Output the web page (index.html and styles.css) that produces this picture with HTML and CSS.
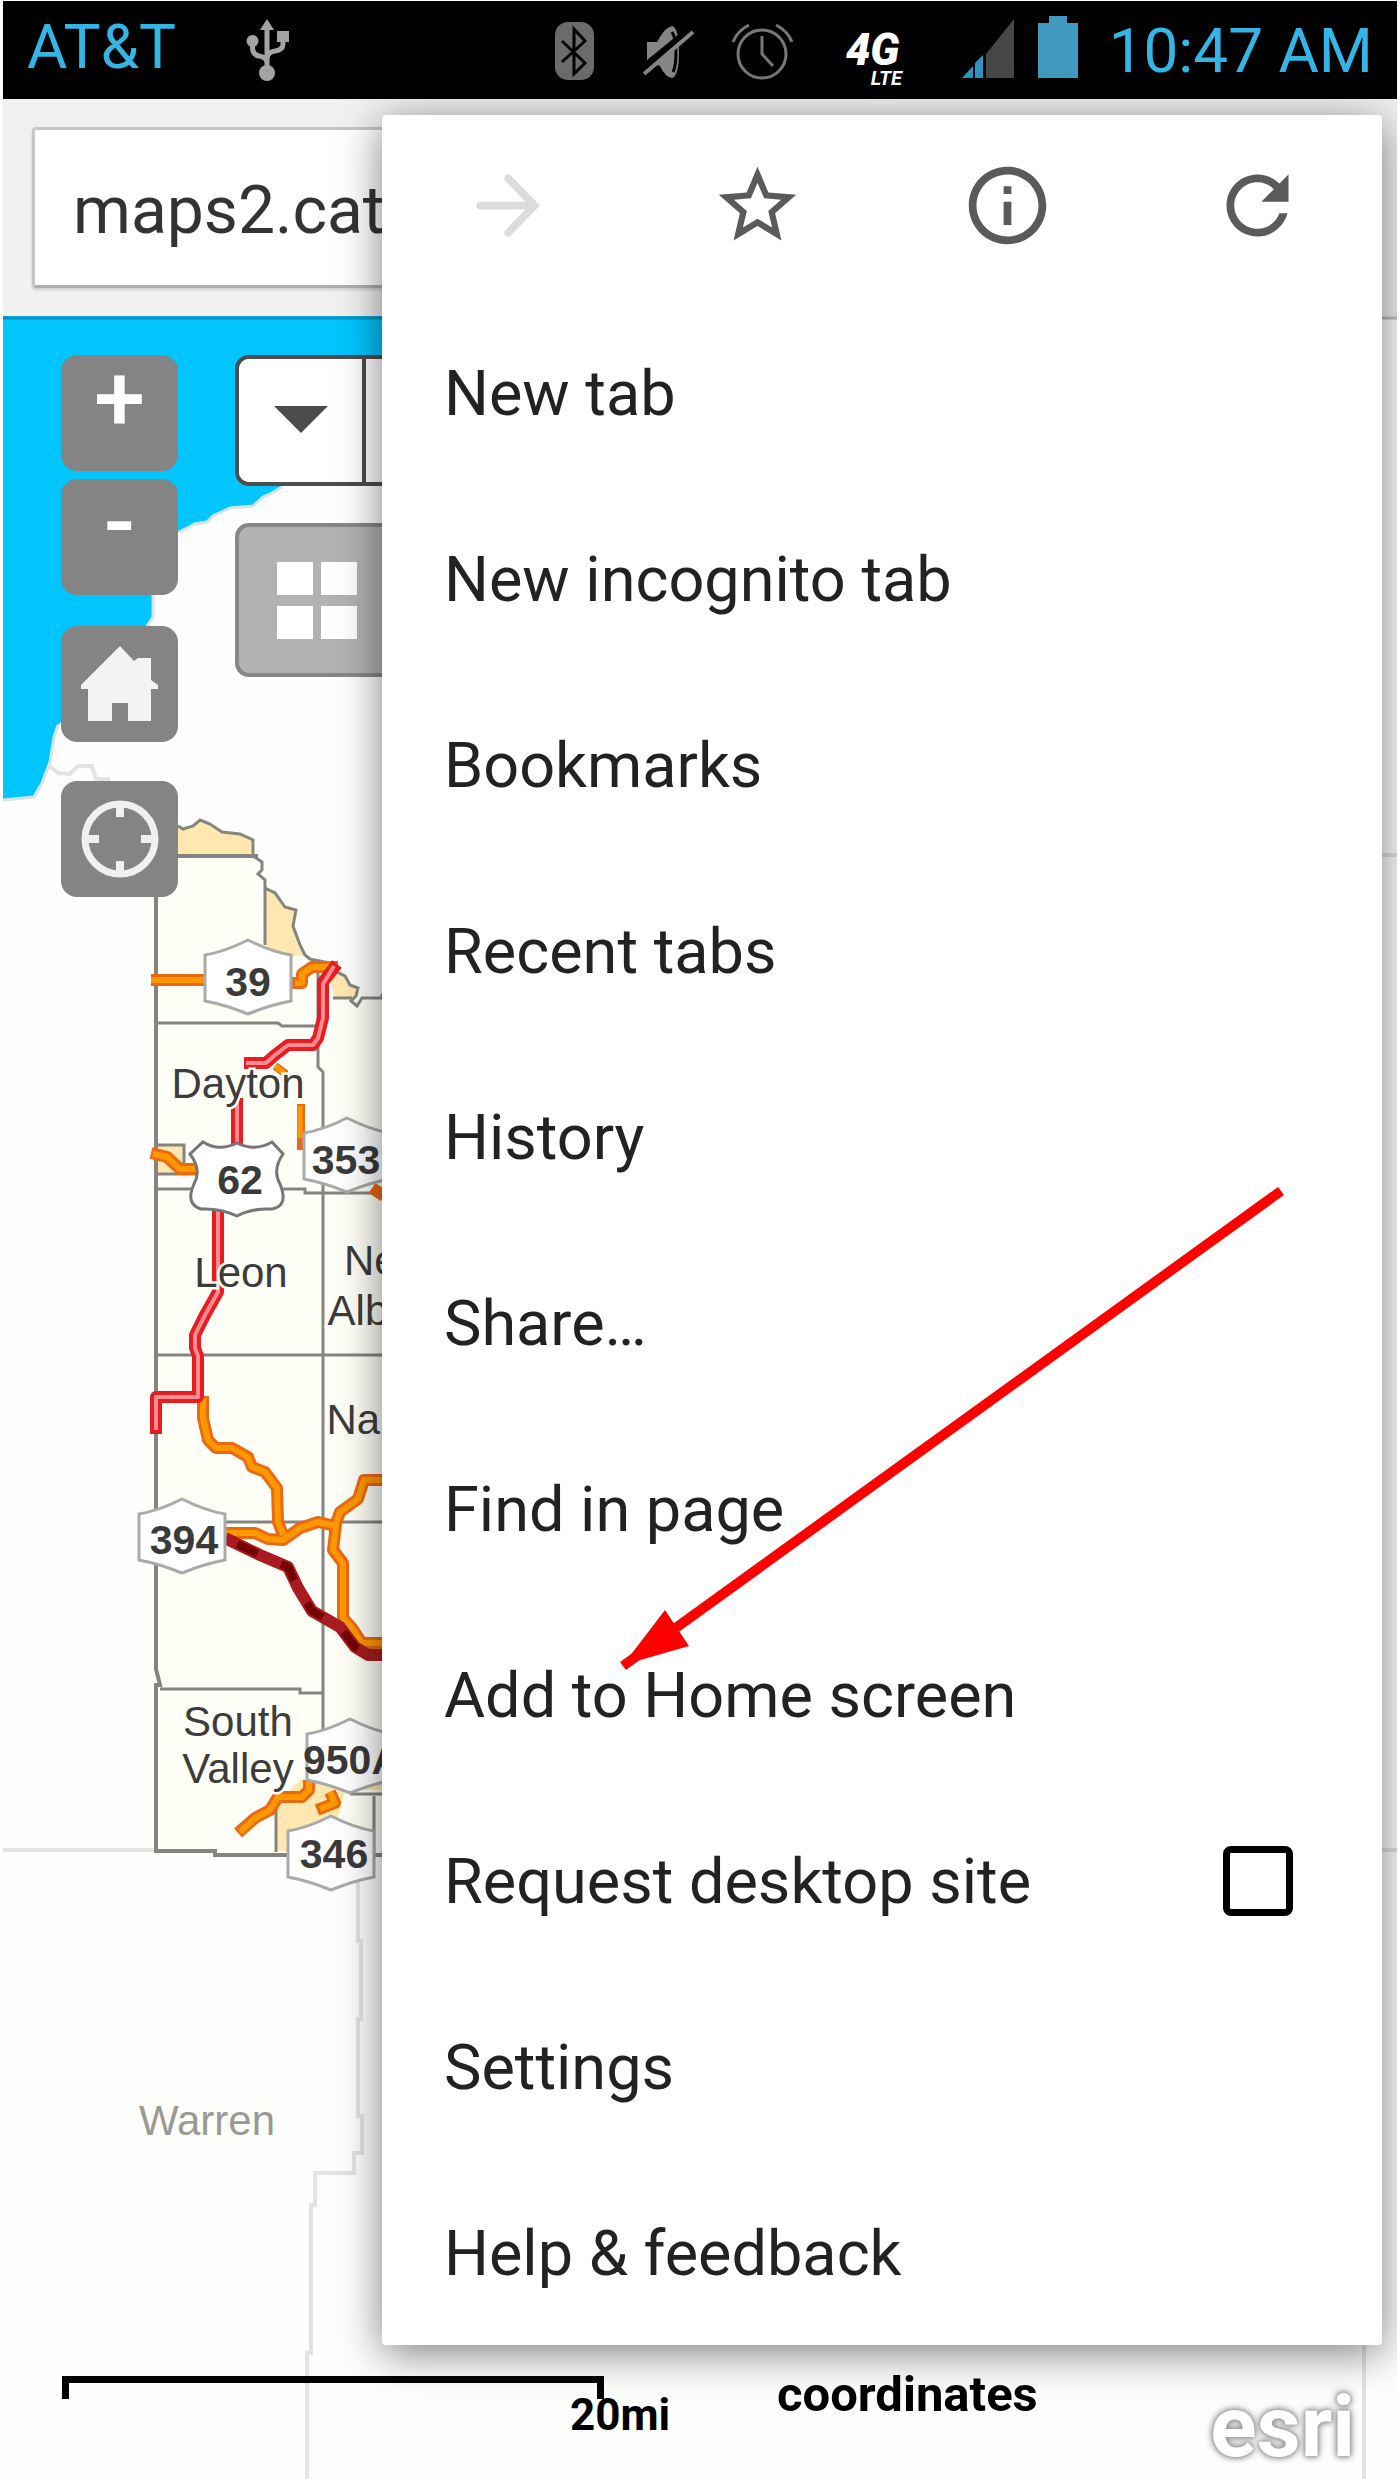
FILE: index.html
```html
<!DOCTYPE html>
<html lang="en">
<head>
    <meta charset="UTF-8">
    <meta name="viewport" content="width=device-width, initial-scale=1.0">
    <title>Add to Home screen</title>
    <link rel="stylesheet" href="styles.css">
</head>
<body>

<div class="phone">

    <header class="status-bar">
        <span class="carrier">AT&amp;T</span>
        <svg class="usb" width="60" height="98" viewBox="239 1 60 98">
            <g fill="none" stroke="#a3a3a3" stroke-width="5">
                <path d="M268 26V72"/>
                <path d="M253.500 44V48Q254 55 260 56Q267 57 268 62"/>
                <path d="M284 38V44Q284 50 276 51Q269 52 268 58"/>
            </g>
            <g fill="#a3a3a3">
                <path d="M268 19L275 30H261Z"/>
                <circle cx="253.500" cy="41" r="6"/>
                <rect x="278" y="31" width="12" height="11"/>
                <circle cx="268" cy="73" r="8"/>
            </g>
        </svg>

        <div class="status-icons">
            <!-- bluetooth -->
            <svg width="94" height="98" viewBox="528 1 94 98">
                <rect x="556" y="22" width="39" height="58" rx="13" fill="#6b6b6b"/>
                <path d="M563 41L586 63L575 74V29L586 41L563 62" fill="none" stroke="#000" stroke-width="3"/>
            </svg>
            <!-- sound off -->
            <svg width="94" height="98" viewBox="622 1 94 98">
                <path d="M648 42H658Q666 27 673 26Q680 28 680 52Q680 76 673 78Q666 77 661 66L648 61Z" fill="#858585"/>
                <path d="M673 32Q677 38 677 52Q677 66 674 72" fill="none" stroke="#000" stroke-width="3"/>
                <path d="M643 70L692 30" stroke="#000" stroke-width="9"/>
                <path d="M645 74L694 32" stroke="#858585" stroke-width="4"/>
            </svg>
            <!-- alarm -->
            <svg width="94" height="98" viewBox="716 1 94 98">
                <g fill="none" stroke="#777" stroke-width="3">
                    <circle cx="763" cy="54" r="24"/>
                    <path d="M763 36V54L774 66M734 42Q738 31 750 25M777 25Q789 31 793 42"/>
                </g>
            </svg>
            <span class="network"><b>4G</b><i>LTE</i></span>
            <!-- signal -->
            <svg width="90" height="98" viewBox="940 1 90 98">
                <path d="M987 54L1015 19V78H987Z" fill="#474747"/>
                <path d="M963 78L974 66V78ZM976 63L984 55V78H976Z" fill="#2d94bd"/>
            </svg>
            <!-- battery -->
            <svg width="72" height="98" viewBox="1030 1 72 98">
                <path d="M1050 16H1068V23H1079V78H1039V23H1050Z" fill="#4299c0"/>
            </svg>
        </div>
        <time class="clock">10:47 AM</time>
    </header>

    <div class="toolbar">
        <input class="url" type="text" aria-label="Address" value="maps2.cattco.org">
    </div>

    <main class="map">
        <svg class="basemap" viewBox="3 316 1394 2163" preserveAspectRatio="xMinYMin slice">
            <defs>
                <path id="shield" d="M-43 -22Q-24 -25 0 -37Q24 -25 43 -22V24Q22 28 0 37Q-22 28 -43 24Z" fill="#fff" stroke="#aaa" stroke-width="3"/>
            </defs>

            <!-- lake -->
            <path d="M3 316H382V486H282L272 492L263 496L253 505L230 507L223 511L213 515L207 521L195 523L179 531L153 560V617L147 626L80 700L58 725L54 737L50 762L42 783L34 797L3 799Z" fill="#00c5ff"/>
            <path d="M282 487L272 493L263 497L253 506L230 508L213 516L207 522L195 524L179 532M153 595V617L147 626M58 725L54 737L50 762L42 783L34 797L3 800" fill="none" stroke="#d5e2e6" stroke-width="3"/>

            <!-- neighbouring county lines -->
            <g fill="none" stroke="#e3e3e1" stroke-width="4">
                <path d="M48 765L58 773L70 774L78 766L92 766L96 779H110"/>
                <path d="M3 1850H156M358 1870V1941H361V2019H358V2116H362V2153H354V2173H315V2205H311V2353H307V2479"/>
                <path d="M1364 2300V2479M1380 855H1397M1380 1850H1397"/>
            </g>

            <!-- county -->
            <path d="M156 856H255L262 880L265 957H310L335 998L358 1000H382V1855H215L156 1851Z" fill="#fffff8"/>
            <g fill="#ffe8b0">
                <path d="M160 828L178 824L183 828L193 825L200 820L210 824L222 832L240 834L253 840V855H160Z"/>
                <path d="M266 887L275 893L285 907L296 910L293 926L300 945L305 955L290 957L266 946Z"/>
                <path d="M318 960L335 972L345 976L350 985L358 988L356 998H335L328 975Z"/>
                <path d="M158 1145H184V1173H158Z"/>
                <path d="M277 1805L300 1780H382V1790H345L330 1850L290 1853L277 1850Z"/>
            </g>
            <g fill="none" stroke="#858580" stroke-width="3">
                <path d="M178 826L183 829L193 826L200 820L210 824L222 832L240 834L253 840V856L262 862V870L258 874L265 880V888L275 893L285 907L296 910L293 926L300 945L305 955L310 959L330 963L337 972L345 976L350 985L358 988L356 996L351 1001L357 1006L362 998H382V994"/>
                <path d="M265 888V945M333 998H352"/>
                <path d="M156 1023H278L282 1026H318M318 960V1067L323 1072V1730M156 1189H305V1193H382M156 1355H382"/>
                <path d="M184 1173V1145H158M158 1174H200"/>
                <path d="M226 1522H382M160 1689H300V1693H322M276 1808V1852M374 1796V1852M350 1794H382"/>
            </g>
            <path d="M178 856H258M156 856V1669L160 1685H156V1851H215V1855H382" fill="none" stroke="#858580" stroke-width="4"/>

            <!-- county roads -->
            <g fill="none" stroke-linejoin="round">
                <g stroke="#ea6a14" stroke-width="12">
                    <path d="M151 980H205M291 983H302V974L312 967H338"/>
                    <path d="M275 1066L286 1074M301 1104V1150" stroke-width="8"/>
                    <path d="M151 1153L167 1157L180 1169H200M372 1188L384 1196"/>
                    <path d="M203 1396V1418L208 1440L216 1448H232L248 1457L252 1467L265 1472L277 1488L278 1522L283 1535"/>
                    <path d="M225 1533H255L268 1539L283 1540L300 1528L318 1522L335 1526L340 1512L358 1499L364 1480H384"/>
                    <path d="M336 1524L333 1550L343 1563V1618L352 1628L362 1643H384"/>
                    <path d="M238 1833L255 1818L270 1810L278 1797H302L309 1790V1780M317 1810L335 1803L330 1792"/>
                </g>
                <g stroke="#ff9800" stroke-width="6">
                    <path d="M151 980H205M295 983H302V974L312 967H338"/>
                    <path d="M275 1066L284 1073M300 1106V1138" stroke-width="5"/>
                    <path d="M153 1154L167 1157L180 1169H200"/>
                    <path d="M203 1398V1418L208 1440L216 1448H232L248 1457L252 1467L265 1472L277 1488L278 1522L283 1535"/>
                    <path d="M225 1533H255L268 1539L283 1540L300 1528L318 1522L335 1526L340 1512L358 1499L364 1480H384"/>
                    <path d="M336 1524L333 1550L343 1563V1618L352 1628L362 1643H384"/>
                    <path d="M240 1832L255 1818L270 1810L278 1797H302L309 1790V1782M320 1809L335 1803L330 1792"/>
                </g>
                <path d="M225 1538L260 1555L288 1567L298 1588L312 1611L340 1627L355 1647L368 1655H384" stroke="#a81c20" stroke-width="12"/>
                <path d="M225 1538L260 1555L288 1567L298 1588L312 1611L340 1627L355 1647L368 1655H384" stroke="#750000" stroke-width="8" stroke-dasharray="22 26" stroke-dashoffset="-62"/>
                <path d="M337 964L323 982V1018L318 1038L313 1045H288L275 1055L266 1063H244M237 1098V1145M218 1210V1292L205 1315L195 1335V1348L198 1356V1397H156V1434" stroke="#e81c23" stroke-width="12"/>
                <path d="M334 966L323 984V1018L318 1038L313 1045H288L275 1055L266 1063H246M237 1102V1145M218 1210V1292L205 1315L195 1335V1348L198 1356V1397H156V1430" stroke="#fb8c8f" stroke-width="4"/>
            </g>

            <!-- route shields -->
            <use href="#shield" x="248" y="977"/>
            <use href="#shield" x="347" y="1155"/>
            <use href="#shield" x="182" y="1536"/>
            <use href="#shield" x="350" y="1756"/>
            <use href="#shield" x="331" y="1853"/>
            <path d="M203 1142Q219 1152 237 1143Q255 1152 272 1142L283 1154Q272 1170 280 1184Q289 1206 272 1209Q252 1208 237 1216Q220 1208 201 1209Q185 1204 194 1184Q202 1170 190 1154Z" fill="#fff" stroke="#777" stroke-width="3"/>
            <g class="route">
                <text x="248" y="996">39</text>
                <text x="240" y="1194">62</text>
                <text x="346" y="1174">353</text>
                <text x="184" y="1554">394</text>
                <text x="352" y="1774">950A</text>
                <text x="334" y="1868">346</text>
            </g>

            <g class="town">
                <text x="238" y="1098">Dayton</text>
                <text x="241" y="1287">Leon</text>
                <text x="386" y="1275">New</text>
                <text x="386" y="1325">Albion</text>
                <text x="386" y="1434">Napoli</text>
                <text x="238" y="1736">South</text>
                <text x="238" y="1783">Valley</text>
                <text class="faint" x="207" y="2135">Warren</text>
            </g>

            <path d="M3 318H1397" stroke="#000" stroke-opacity=".25" stroke-width="3"/>
        </svg>

        <div class="map-controls">
            <div class="zoom">
                <button class="control" type="button" aria-label="Zoom in">+</button>
                <button class="control" type="button" aria-label="Zoom out">-</button>
            </div>
            <button class="control home" type="button" aria-label="Home">
                <svg width="80" height="76" viewBox="0 0 80 76"><path d="M40 0L54 15L58 12H71V34L78 39V43H71V75H48V57H32V75H8V43H1V39Z" fill="#f3f3f3"/></svg>
            </button>
            <button class="control locate" type="button" aria-label="My location">
                <svg width="80" height="80" viewBox="0 0 80 80" fill="none" stroke="#f0f0f0"><circle cx="40" cy="40" r="35" stroke-width="7"/><path d="M40 5V18M40 62V75M5 40H19M61 40H75" stroke-width="8"/></svg>
            </button>
        </div>

        <div class="map-tools">
            <div class="search">
                <button type="button" aria-label="Search options"><svg width="54" height="27" viewBox="0 0 54 27"><path d="M0 0H54L27 27Z" fill="#4c4c4c"/></svg></button>
                <input type="text" aria-label="Find address or place">
            </div>
            <button class="gallery" type="button" aria-label="Basemap gallery"><span></span><span></span><span></span><span></span></button>
        </div>

        <div class="scale-bar"><span>20mi</span></div>
        <span class="coordinates">coordinates</span>
        <a class="esri" href="#">esri</a>
    </main>

    <nav class="menu">
        <div class="menu-icons">
            <button type="button" aria-label="Forward" disabled>
                <svg viewBox="0 0 24 24" fill="none" stroke="#dcdcdc" stroke-width="2" stroke-linecap="round"><path d="M5 12H18.500M12.200 5L19 12L12.200 19"/></svg>
            </button>
            <button type="button" aria-label="Bookmark this page">
                <svg viewBox="0 0 24 24"><path d="M22 9.240l-7.190-.620L12 2 9.190 8.630 2 9.240l5.460 4.730L5.820 21 12 17.270 18.180 21l-1.630-7.030L22 9.240zM12 15.400l-3.760 2.270 1-4.280-3.320-2.880 4.380-.380L12 6.100l1.710 4.040 4.380.380-3.320 2.880 1 4.280L12 15.400z"/></svg>
            </button>
            <button type="button" aria-label="Page info">
                <svg viewBox="0 0 24 24"><path d="M11 17h2v-6h-2v6zm1-15C6.480 2 2 6.480 2 12s4.480 10 10 10 10-4.480 10-10S17.520 2 12 2zm0 18c-4.410 0-8-3.590-8-8s3.590-8 8-8 8 3.590 8 8-3.590 8-8 8zM11 9h2V7h-2v2z"/></svg>
            </button>
            <button type="button" aria-label="Reload">
                <svg viewBox="0 0 24 24"><path d="M17.650 6.350C16.200 4.900 14.210 4 12 4c-4.420 0-7.990 3.580-7.990 8s3.570 8 7.990 8c3.730 0 6.840-2.550 7.730-6h-2.080c-.820 2.330-3.040 4-5.650 4-3.310 0-6-2.690-6-6s2.690-6 6-6c1.660 0 3.140.690 4.220 1.780L13 11h7V4l-2.350 2.350z"/></svg>
            </button>
        </div>
        <a class="item" href="#">New tab</a>
        <a class="item" href="#">New incognito tab</a>
        <a class="item" href="#">Bookmarks</a>
        <a class="item" href="#">Recent tabs</a>
        <a class="item" href="#">History</a>
        <a class="item" href="#">Share…</a>
        <a class="item" href="#">Find in page</a>
        <a class="item" href="#">Add to Home screen</a>
        <label class="item" for="desktop">Request desktop site <input type="checkbox" id="desktop"></label>
        <a class="item" href="#">Settings</a>
        <a class="item" href="#">Help &amp; feedback</a>
    </nav>

    <!-- points at "Add to Home screen" -->
    <svg class="pointer" viewBox="3 1 1394 2478" preserveAspectRatio="xMinYMin slice">
        <path d="M1281 1191L623 1666" stroke="#f00" stroke-width="10"/>
        <path d="M623 1665L665 1610L689 1646Z" fill="#f00"/>
    </svg>

</div>

</body>
</html>
```

FILE: styles.css
```css
* {
    box-sizing: border-box;
}

body {
    margin: 0;
    background: #fff;
    font-family: Roboto, sans-serif;
}

button {
    padding: 0;
    border: none;
    font-family: inherit;
}

.phone {
    position: relative;
    display: flex;
    flex-direction: column;
    min-height: calc(100vh - 1px);
    margin: 1px 3px 0;
    overflow: hidden;
}

/* status bar */
.status-bar {
    display: flex;
    align-items: center;
    height: 98px;
    padding: 0 24px;
    background: #000;
    color: #33b5e5;
    font-size: 62px;
    white-space: nowrap;
}

.carrier {
    padding-bottom: 8px;
}

.usb {
    margin-left: 62px;
}

.status-icons {
    display: flex;
    margin-left: auto;
}

.clock {
    margin-left: 8px;
}

.network {
    display: flex;
    flex-direction: column;
    width: 130px;
    padding: 29px 0 0 37px;
    color: #fff;
    line-height: 1;
    font-weight: 900;
    font-style: italic;
}

.network b {
    font-size: 44px;
    font-weight: 900;
    line-height: 40px;
}

.network i {
    padding-left: 25px;
    font-size: 20px;
    font-weight: 700;
    line-height: 16px;
}

/* address bar */
.toolbar {
    padding: 28px 28px 28px 29px;
    background: #f1f1f1;
}

.url {
    display: block;
    width: 100%;
    height: 161px;
    padding: 6px 38px 0;
    border: 3px solid #c6c6c6;
    border-bottom-color: #b0b0b0;
    border-radius: 4px;
    background: #fff;
    box-shadow: 0 2px 3px rgba(0, 0, 0, 0.15);
    color: #333;
    font-family: inherit;
    font-size: 66px;
}

/* map */
.map {
    position: relative;
    flex: 1;
    background: #fefefd;
}

.basemap {
    position: absolute;
    width: 100%;
    height: 100%;
}

.town,
.route {
    font-family: "Liberation Sans", Arial, sans-serif;
    text-anchor: middle;
}

.town {
    font-size: 42px;
    fill: #3c3c3c;
    stroke: #fffff8;
    stroke-width: 5px;
    paint-order: stroke;
}

.town .faint {
    fill: #999;
}

.route {
    font-size: 41px;
    font-weight: 700;
    fill: #3a3a3a;
}

.map-controls {
    position: absolute;
    top: 39px;
    left: 58px;
    display: flex;
    flex-direction: column;
    gap: 39px;
}

.zoom {
    display: flex;
    flex-direction: column;
    gap: 8px;
}

.control {
    display: flex;
    align-items: center;
    justify-content: center;
    width: 117px;
    height: 116px;
    border-radius: 16px;
    background: #848484;
    color: #fff;
}

.zoom .control {
    padding-bottom: 28px;
    font-size: 92px;
    font-weight: 500;
    line-height: 80px;
}

.home {
    margin-top: -8px;
}

.map-tools {
    position: absolute;
    top: 39px;
    left: 232px;
    right: 28px;
}

.search {
    display: flex;
    height: 131px;
    border: 4px solid #4d4d4d;
    border-radius: 14px;
    background: #fff;
    overflow: hidden;
}

.search button {
    width: 127px;
    border-right: 4px solid #4d4d4d;
    background: #fff;
}

.search input {
    flex: 1;
    border: none;
    font-size: 42px;
}

.gallery {
    display: grid;
    grid-template-columns: 36px 36px;
    grid-template-rows: 33px 33px;
    gap: 11px 8px;
    place-content: center;
    width: 164px;
    height: 154px;
    margin-top: 37px;
    border: 4px solid #878787;
    border-radius: 14px;
    background: #b2b2b2;
}

.gallery span {
    background: #fff;
}

.scale-bar {
    position: absolute;
    left: 59px;
    bottom: 80px;
    width: 542px;
    height: 23px;
    border: 7px solid #000;
    border-bottom: none;
    font-size: 44px;
    font-weight: 700;
}

.scale-bar span {
    position: absolute;
    left: 501px;
    top: 6px;
}

.coordinates {
    position: absolute;
    left: 774px;
    bottom: 56px;
    font-size: 49px;
    font-weight: 700;
}

.esri {
    position: absolute;
    right: 42px;
    bottom: 0;
    color: #fff;
    font-size: 86px;
    font-weight: 700;
    line-height: 104px;
    text-decoration: none;
    text-shadow: 0 0 4px #999, 0 0 6px #999, 0 0 10px #aaa;
}

/* browser menu */
.menu {
    position: absolute;
    top: 114px;
    right: 15px;
    bottom: 134px;
    left: 379px;
    display: flex;
    flex-direction: column;
    border-radius: 4px;
    background: #fff;
    box-shadow: 0 8px 44px rgba(0, 0, 0, 0.5);
}

.menu-icons {
    display: flex;
    flex: 1;
}

.menu-icons button {
    flex: 1;
    background: none;
}

.menu-icons svg {
    width: 93px;
    height: 93px;
    fill: #5a5a5a;
}

.menu-icons button:disabled svg {
    fill: none;
}

.item {
    display: flex;
    flex: 1;
    align-items: center;
    justify-content: space-between;
    min-height: 100px;
    padding: 2px 89px 0 62px;
    color: #222;
    font-size: 63px;
    text-decoration: none;
}

.item input {
    appearance: none;
    width: 70px;
    height: 70px;
    margin: 0;
    border: 7px solid #000;
    border-radius: 8px;
}

.item input:checked {
    background: #000;
}

.pointer {
    position: absolute;
    width: 100%;
    height: 100%;
    pointer-events: none;
}
```
